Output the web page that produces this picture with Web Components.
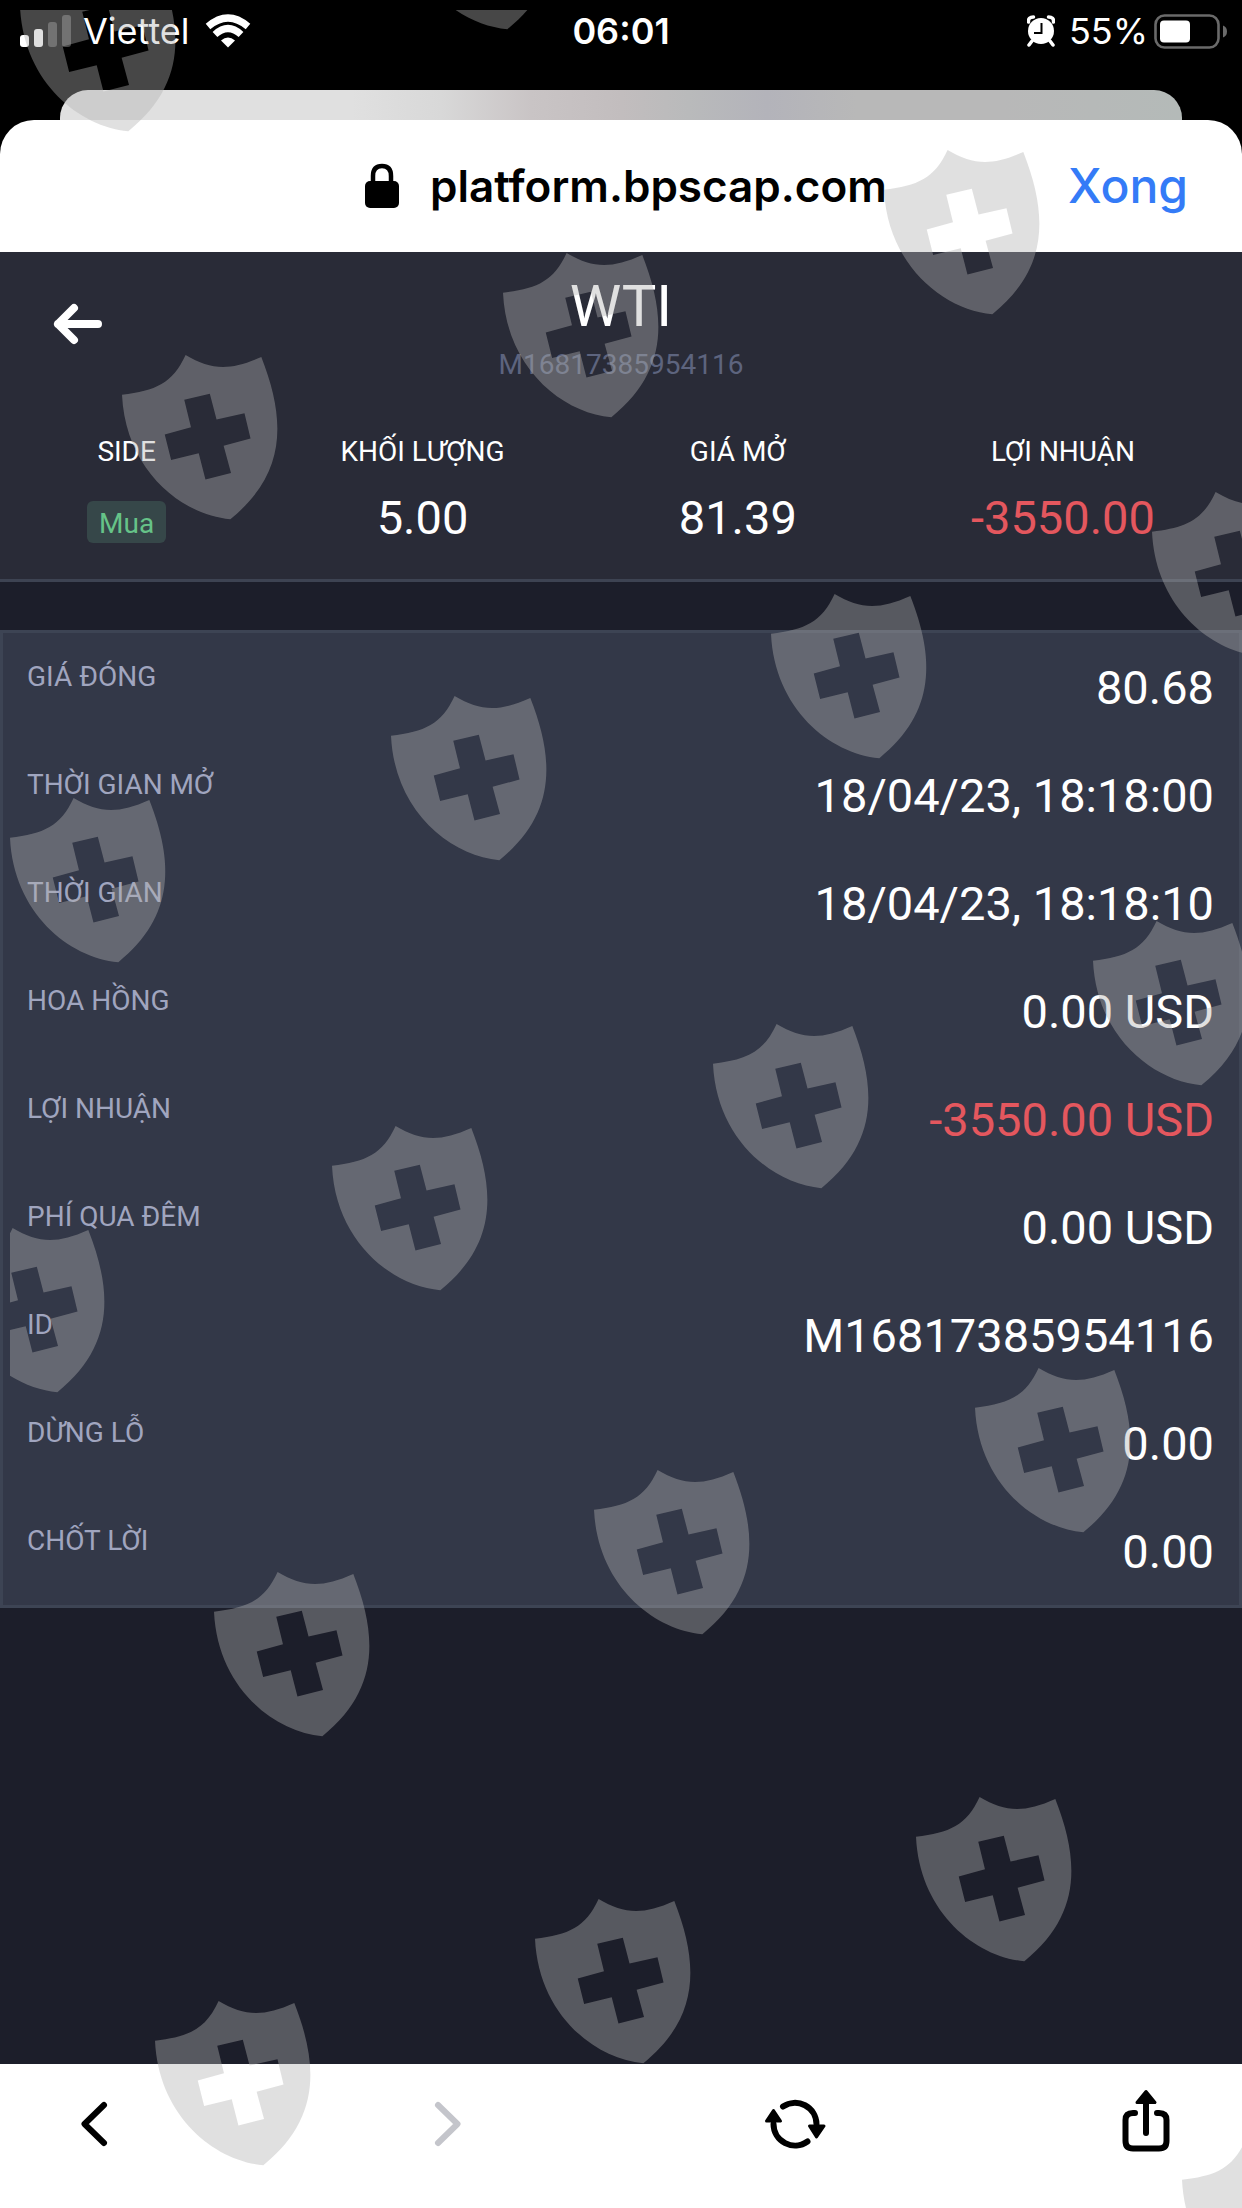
<!DOCTYPE html>
<html lang="vi">
<head>
<meta charset="utf-8">
<meta name="viewport" content="width=device-width, initial-scale=1">
<title>WTI</title>
<style>
body{margin:0;background:#1c1e2a}
</style>
</head>
<body>
<trade-app></trade-app>
<script>
const define=(name,html,setup)=>customElements.define(name,class extends HTMLElement{
  connectedCallback(){
    if(this.shadowRoot)return;
    this.attachShadow({mode:'open'}).innerHTML=html;
    if(setup)setup(this,this.shadowRoot);
  }
});

define('status-bar',`
<style>
:host{display:grid;grid-template-columns:1fr auto 1fr;align-items:start;height:90px;padding:8px 14px 0;box-sizing:border-box;background:#000;color:#fff;font:400 36px/46px Inter,sans-serif}
div{display:flex;align-items:center}
.l{gap:12px;padding-left:6px}.l svg:last-child{margin-left:3px}
.r{justify-content:flex-end;gap:6px}.r svg:first-child{margin-right:8px}
b{font-weight:600}
svg{display:block}
</style>
<div class="l">
<svg width="51" height="34" viewBox="0 0 51 34" fill="#fff"><rect y="21" width="9" height="12" rx="3"/><rect x="14" y="15" width="9" height="18" rx="3"/><g fill="#484848"><rect x="28" y="8" width="9" height="25" rx="3"/><rect x="42" y="1" width="9" height="32" rx="3"/></g></svg>
<span>Viettel</span>
<svg width="46" height="34" viewBox="0 0 46 34" fill="none" stroke="#fff" stroke-width="7"><path d="M3 12.5Q23-4.5 43 12.5"/><path d="M10 20.5Q23 8.500 36 20.500"/><path d="M16 26.500Q23 20.500 30 26.500L23 33.500Z" fill="#fff" stroke="none"/></svg>
</div>
<b>06:01</b>
<div class="r">
<svg width="28" height="32" viewBox="0 0 28 32"><circle cx="14" cy="16" r="13" fill="#fff"/><path d="M1.500 7Q1 2 6.500 2M26.500 7Q27 2 21.500 2M5 26l-3 4M23 26l3 4" stroke="#fff" stroke-width="3.500" fill="none" stroke-linecap="round"/><path d="M14.500 8v10H7" stroke="#000" stroke-width="2" fill="none"/></svg>
<span>55%</span>
<svg width="74" height="36" viewBox="0 0 74 36"><rect x="1.500" y="2.500" width="63" height="32" rx="9" fill="none" stroke="#6a6a6a" stroke-width="2.600"/><rect x="6" y="7.500" width="30" height="22" rx="4" fill="#fff"/><path d="M69 12.500q4 1.500 4 6t-4 6z" fill="#6a6a6a"/></svg>
</div>`);

define('address-bar',`
<style>
:host{display:block;background:#000;font-family:Inter,sans-serif}
.peek{height:30px;margin:0 60px;border-radius:28px 28px 0 0;background:linear-gradient(90deg,#e0e0e0 0 26%,#d8d8d8 34%,#c9c4c5 42%,#c2bdbe 50%,#b9babb 56%,#b3b3ba 63%,#b8b8b8 71%,#b8b8b8 84%,#b4bab8)}
.bar{display:grid;grid-template-columns:1fr auto 1fr;align-items:center;height:132px;padding:0 54px 0 64px;border-radius:34px 34px 0 0;background:#fff;box-sizing:border-box}
.url{grid-column:2;display:flex;align-items:center;gap:31px;font-size:44px;line-height:60px;font-weight:600;color:#000}
button{justify-self:end;border:0;background:none;padding:0;color:#347bf7;font:500 48px/64px Inter,sans-serif}
</style>
<div class="peek"></div>
<div class="bar"><div class="url"><svg width="34" height="46" viewBox="0 0 34 46"><path d="M8 20V13Q8 3 17 3T26 13V20" fill="none" stroke="#000" stroke-width="4.500"/><rect y="18" width="34" height="27" rx="5"/></svg><span>platform.bpscap.com</span></div><button>Xong</button></div>`);

define('stat-item',`
<style>
:host{display:flex;flex-direction:column;align-items:center;gap:18px}
.k{font-size:28px;line-height:40px}
.v{display:flex;align-items:flex-end;height:56px;font-size:47px;line-height:56px;color:var(--tone,#fff)}
:host([badge]) .v{height:53px;padding-bottom:3px;font-size:28px;line-height:38px}
:host([badge]) .v span{padding:4px 12px 0;border-radius:6px;background:#364749;color:#66c388}
</style>
<div class="k"><slot name="label"></slot></div><div class="v"><span><slot></slot></span></div>`);

define('trade-header',`
<style>
:host{display:block;background:#292b37;border-bottom:3px solid #3d4352;color:#fff;padding:20px 0 33px}
.top{display:grid;grid-template-columns:1fr auto 1fr;text-align:center}
button{justify-self:start;align-self:start;margin:28px 0 0 52px;padding:0;border:0;background:none}
svg{display:block}
h1{margin:0;font-size:58px;line-height:68px;font-weight:400}
p{margin:0;font-size:28px;line-height:50px;color:#5d647e}
.stats{display:flex;justify-content:space-around;margin-top:42px}
.red{--tone:#e4575e}
</style>
<div class="top"><button aria-label="Quay lại"><svg width="52" height="48" viewBox="0 0 52 48" fill="none" stroke="#fff" stroke-width="8" stroke-linecap="round" stroke-linejoin="round"><path d="M46 24H6M22 8L6 24L22 40"/></svg></button><div><h1>WTI</h1><p>M16817385954116</p></div></div>
<div class="stats">
<stat-item badge><span slot="label">SIDE</span>Mua</stat-item>
<stat-item><span slot="label">KHỐI LƯỢNG</span>5.00</stat-item>
<stat-item><span slot="label">GIÁ MỞ</span>81.39</stat-item>
<stat-item class="red"><span slot="label">LỢI NHUẬN</span>-3550.00</stat-item>
</div>`);

define('detail-row',`
<style>
:host{display:flex;justify-content:space-between;align-items:flex-start;padding:26px 25px 24px 24px}
.k{font-size:28px;line-height:36px;color:#a0a5bf}
.v{font-size:47px;line-height:58px;color:var(--tone,#fff)}
</style>
<div class="k"><slot name="label"></slot></div><div class="v"><slot></slot></div>`);

define('trade-details',`
<style>
:host{display:block;margin-top:48px;border:3px solid #3d4454;background:#333848}
.red{--tone:#e4575e}
</style>
<detail-row><span slot="label">GIÁ ĐÓNG</span>80.68</detail-row>
<detail-row><span slot="label">THỜI GIAN MỞ</span>18/04/23, 18:18:00</detail-row>
<detail-row><span slot="label">THỜI GIAN</span>18/04/23, 18:18:10</detail-row>
<detail-row><span slot="label">HOA HỒNG</span>0.00 USD</detail-row>
<detail-row class="red"><span slot="label">LỢI NHUẬN</span>-3550.00 USD</detail-row>
<detail-row><span slot="label">PHÍ QUA ĐÊM</span>0.00 USD</detail-row>
<detail-row><span slot="label">ID</span>M16817385954116</detail-row>
<detail-row><span slot="label">DỪNG LỖ</span>0.00</detail-row>
<detail-row><span slot="label">CHỐT LỜI</span>0.00</detail-row>`);

define('browser-toolbar',`
<style>
:host{display:flex;justify-content:space-between;align-items:flex-start;height:144px;padding:24px 66px 0 64px;box-sizing:border-box;background:#fff}
button{padding:0;border:0;background:none}
svg{display:block;fill:none;stroke:#000;stroke-width:6;stroke-linecap:round;stroke-linejoin:round}
</style>
<button aria-label="Trước"><svg width="60" height="72" viewBox="0 0 60 72"><path d="M40 17L20.500 36L40 55"/></svg></button>
<button aria-label="Sau" disabled><svg width="60" height="72" viewBox="0 0 60 72" style="stroke:#c4c5cb"><path d="M24 17L43.500 36L24 55"/></svg></button>
<button aria-label="Tải lại"><svg width="62" height="72" viewBox="0 0 62 72"><path d="M19 18.500A21.500 21.500 0 0 1 52.500 36"/><path d="M43.500 53.500A21.500 21.500 0 0 1 9.500 36"/><g fill="#000" style="stroke-width:3"><path d="M2.500 33L9.500 22.500L16.500 33Z"/><path d="M45.500 38H60L52.500 49Z"/></g></svg></button>
<button aria-label="Chia sẻ"><svg width="60" height="72" viewBox="0 0 60 72"><path d="M19 25H17Q9.500 25 9.500 32V53Q9.500 60.500 17 60.500H43Q50.500 60.500 50.500 53V32Q50.500 25 43 25H41"/><path d="M30 13V45"/><path d="M21 14.500L30 3.500L39 14.500Z" fill="#000" style="stroke-width:3"/></svg></button>`);

define('shield-pattern',`
<style>
:host{display:block;position:absolute;inset:10px 0 0 10px;overflow:hidden;pointer-events:none}
svg{display:block;width:100%;height:100%}
</style>
<svg aria-hidden="true"><defs><path id="s" transform="scale(.3365)" fill="#b2b2b2" fill-opacity=".4" fill-rule="evenodd" d="M0 118C100 106 150 85 189 0C265 45 320 48 414 6C486 190 492 350 322 488C175 475 10 340 0 118ZM185 133L261 115L281 192L364 173L382 248L302 270L324 351L248 370L228 292L146 312L127 236L205 215Z"/></defs></svg>`,
(host,root)=>{
  const svg=root.querySelector('svg');
  [[20,-33],[399,-135],[884,150],[503,253],[122,355],[1152,492],[771,594],[391,696],[10,798],[1093,921],[713,1024],[332,1126],[-51,1228],[975,1368],[594,1470],[214,1572],[916,1797],[535,1899],[155,2001],[1182,2140]].forEach(([x,y])=>{
    const u=document.createElementNS('http://www.w3.org/2000/svg','use');
    u.setAttribute('href','#s');u.setAttribute('x',x-10);u.setAttribute('y',y-10);
    svg.append(u);
  });
});

define('trade-app',`
<style>
:host{position:relative;display:flex;flex-direction:column;min-height:100vh;overflow:hidden;background:#1c1e2a;font-family:Roboto,sans-serif}
main{flex:1}
</style>
<status-bar></status-bar>
<address-bar></address-bar>
<main><trade-header></trade-header><trade-details></trade-details></main>
<browser-toolbar></browser-toolbar>
<shield-pattern></shield-pattern>`);
</script>
</body>
</html>
